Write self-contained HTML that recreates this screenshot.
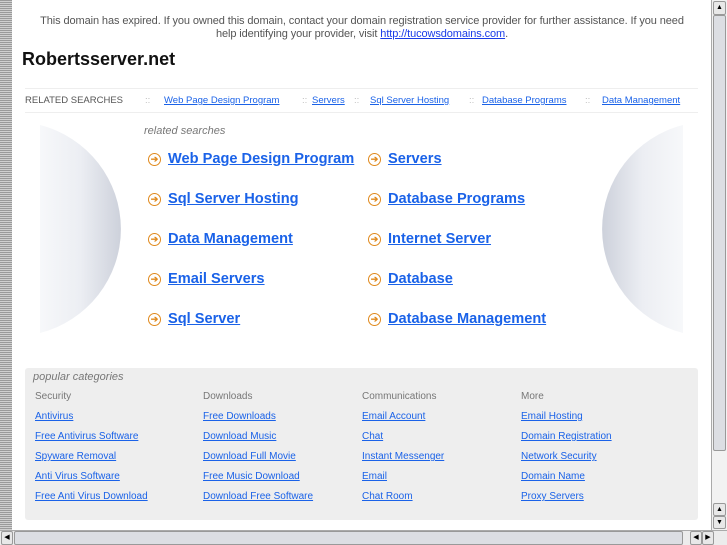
<!DOCTYPE html>
<html><head><style>
*{margin:0;padding:0;box-sizing:border-box}
body{width:727px;height:545px;overflow:hidden;background:#fff;font-family:"Liberation Sans",sans-serif;position:relative}
a{color:#1a62e8;text-decoration:underline}
.abs{position:absolute}
.strip{left:0;top:0;width:12px;height:530px;background:repeating-linear-gradient(#9a9a9a 0 1px,#cfcfcf 1px 2px)}
.top{left:36px;width:652px;top:15px;text-align:center;font-size:11px;color:#555;line-height:13px;letter-spacing:-0.1px}
.top a{color:#1a3ce8}
h1{position:absolute;left:22px;top:49px;font-size:18px;font-weight:bold;color:#111}
.bar{left:25px;top:88px;width:673px;height:25px;border-top:1px solid #eee;border-bottom:1px solid #eee;font-size:9.5px;color:#555}
.bar span,.bar a{position:absolute;top:6px}
.sep{color:#bbb}
.rs{left:144px;top:125px;font-size:11px;font-style:italic;color:#777}
.lk{position:absolute;font-size:14.6px;font-weight:bold}
.ar{position:absolute;width:13px;height:13px;border-radius:50%;border:1.5px solid #e08a1e;color:#e08a1e;font-size:9px;line-height:10px;text-align:center;font-weight:bold}
.pop{left:25px;top:368px;width:673px;height:152px;background:#eee;border-radius:3px}
.pop .t{position:absolute;left:8px;top:3px;font-size:11px;font-style:italic;color:#777}
.col{position:absolute;top:23px;font-size:10px;color:#777}
.col div{height:20px}
.col a{color:#1a62e8}
.vs{left:711px;top:0;width:16px;height:530px;background:#f2f2f2;border-left:1px solid #aaa}
.btn{position:absolute;background:#e8e8e8;border:1px solid #999;border-radius:2px;font-size:7px;text-align:center;line-height:12px;color:#000}
.hs{left:0;top:530px;width:727px;height:15px;background:#ececec;border-top:1px solid #aaa}
</style></head><body>
<div class="abs strip"></div>
<div class="abs top">This domain has expired. If you owned this domain, contact your domain registration service provider for further assistance. If you need help identifying your provider, visit <a href="#">http://tucowsdomains.com</a>.</div>
<h1>Robertsserver.net</h1>
<div class="abs bar">
<span style="left:0">RELATED SEARCHES</span>
<span class="sep" style="left:120px">::</span><a style="left:139px" href="#">Web Page Design Program</a>
<span class="sep" style="left:277px">::</span><a style="left:287px" href="#">Servers</a>
<span class="sep" style="left:329px">::</span><a style="left:345px" href="#">Sql Server Hosting</a>
<span class="sep" style="left:444px">::</span><a style="left:457px" href="#">Database Programs</a>
<span class="sep" style="left:560px">::</span><a style="left:577px" href="#">Data Management</a>
</div>
<svg class="abs" style="left:0;top:0" width="727" height="545">
<defs>
<linearGradient id="gl" x1="0" x2="1"><stop offset="0" stop-color="#f7f8fa"/><stop offset="0.5" stop-color="#eceef3"/><stop offset="1" stop-color="#cdd1db"/></linearGradient>
<linearGradient id="gr" x1="0" x2="1"><stop offset="0" stop-color="#cdd1db"/><stop offset="0.5" stop-color="#eceef3"/><stop offset="1" stop-color="#f7f8fa"/></linearGradient>
</defs>
<path d="M40 125 A107.3 107.3 0 0 1 40 333 Z" fill="url(#gl)"/>
<path d="M683 125 A107.3 107.3 0 0 0 683 333 Z" fill="url(#gr)"/>
</svg>
<div class="abs rs">related searches</div>
<div class="ar" style="left:148px;top:153px">➔</div><a class="lk" style="left:168px;top:151px" href="#">Web Page Design Program</a>
<div class="ar" style="left:368px;top:153px">➔</div><a class="lk" style="left:388px;top:151px" href="#">Servers</a>
<div class="ar" style="left:148px;top:193px">➔</div><a class="lk" style="left:168px;top:191px" href="#">Sql Server Hosting</a>
<div class="ar" style="left:368px;top:193px">➔</div><a class="lk" style="left:388px;top:191px" href="#">Database Programs</a>
<div class="ar" style="left:148px;top:233px">➔</div><a class="lk" style="left:168px;top:231px" href="#">Data Management</a>
<div class="ar" style="left:368px;top:233px">➔</div><a class="lk" style="left:388px;top:231px" href="#">Internet Server</a>
<div class="ar" style="left:148px;top:273px">➔</div><a class="lk" style="left:168px;top:271px" href="#">Email Servers</a>
<div class="ar" style="left:368px;top:273px">➔</div><a class="lk" style="left:388px;top:271px" href="#">Database</a>
<div class="ar" style="left:148px;top:313px">➔</div><a class="lk" style="left:168px;top:311px" href="#">Sql Server</a>
<div class="ar" style="left:368px;top:313px">➔</div><a class="lk" style="left:388px;top:311px" href="#">Database Management</a>
<div class="abs pop"><div class="t">popular categories</div>
<div class="col" style="left:10px"><div>Security</div><div><a href="#">Antivirus</a></div><div><a href="#">Free Antivirus Software</a></div><div><a href="#">Spyware Removal</a></div><div><a href="#">Anti Virus Software</a></div><div><a href="#">Free Anti Virus Download</a></div></div>
<div class="col" style="left:178px"><div>Downloads</div><div><a href="#">Free Downloads</a></div><div><a href="#">Download Music</a></div><div><a href="#">Download Full Movie</a></div><div><a href="#">Free Music Download</a></div><div><a href="#">Download Free Software</a></div></div>
<div class="col" style="left:337px"><div>Communications</div><div><a href="#">Email Account</a></div><div><a href="#">Chat</a></div><div><a href="#">Instant Messenger</a></div><div><a href="#">Email</a></div><div><a href="#">Chat Room</a></div></div>
<div class="col" style="left:496px"><div>More</div><div><a href="#">Email Hosting</a></div><div><a href="#">Domain Registration</a></div><div><a href="#">Network Security</a></div><div><a href="#">Domain Name</a></div><div><a href="#">Proxy Servers</a></div></div>
</div>
<div class="abs vs">
<div class="btn" style="left:1px;top:1px;width:13px;height:14px">▲</div>
<div style="position:absolute;left:1px;top:15px;width:13px;height:436px;background:#dcdee3;border:1px solid #999;border-radius:2px"></div>
<div class="btn" style="left:1px;top:503px;width:13px;height:13px">▲</div>
<div class="btn" style="left:1px;top:516px;width:13px;height:13px">▼</div>
</div>
<div class="abs hs">
<div class="btn" style="left:1px;top:0;width:12px;height:14px">◀</div>
<div style="position:absolute;left:14px;top:0;width:669px;height:14px;background:#dcdee3;border:1px solid #999;border-radius:2px"></div>
<div class="btn" style="left:690px;top:0;width:12px;height:14px">◀</div>
<div class="btn" style="left:702px;top:0;width:12px;height:14px">▶</div>
</div>
</body></html>
